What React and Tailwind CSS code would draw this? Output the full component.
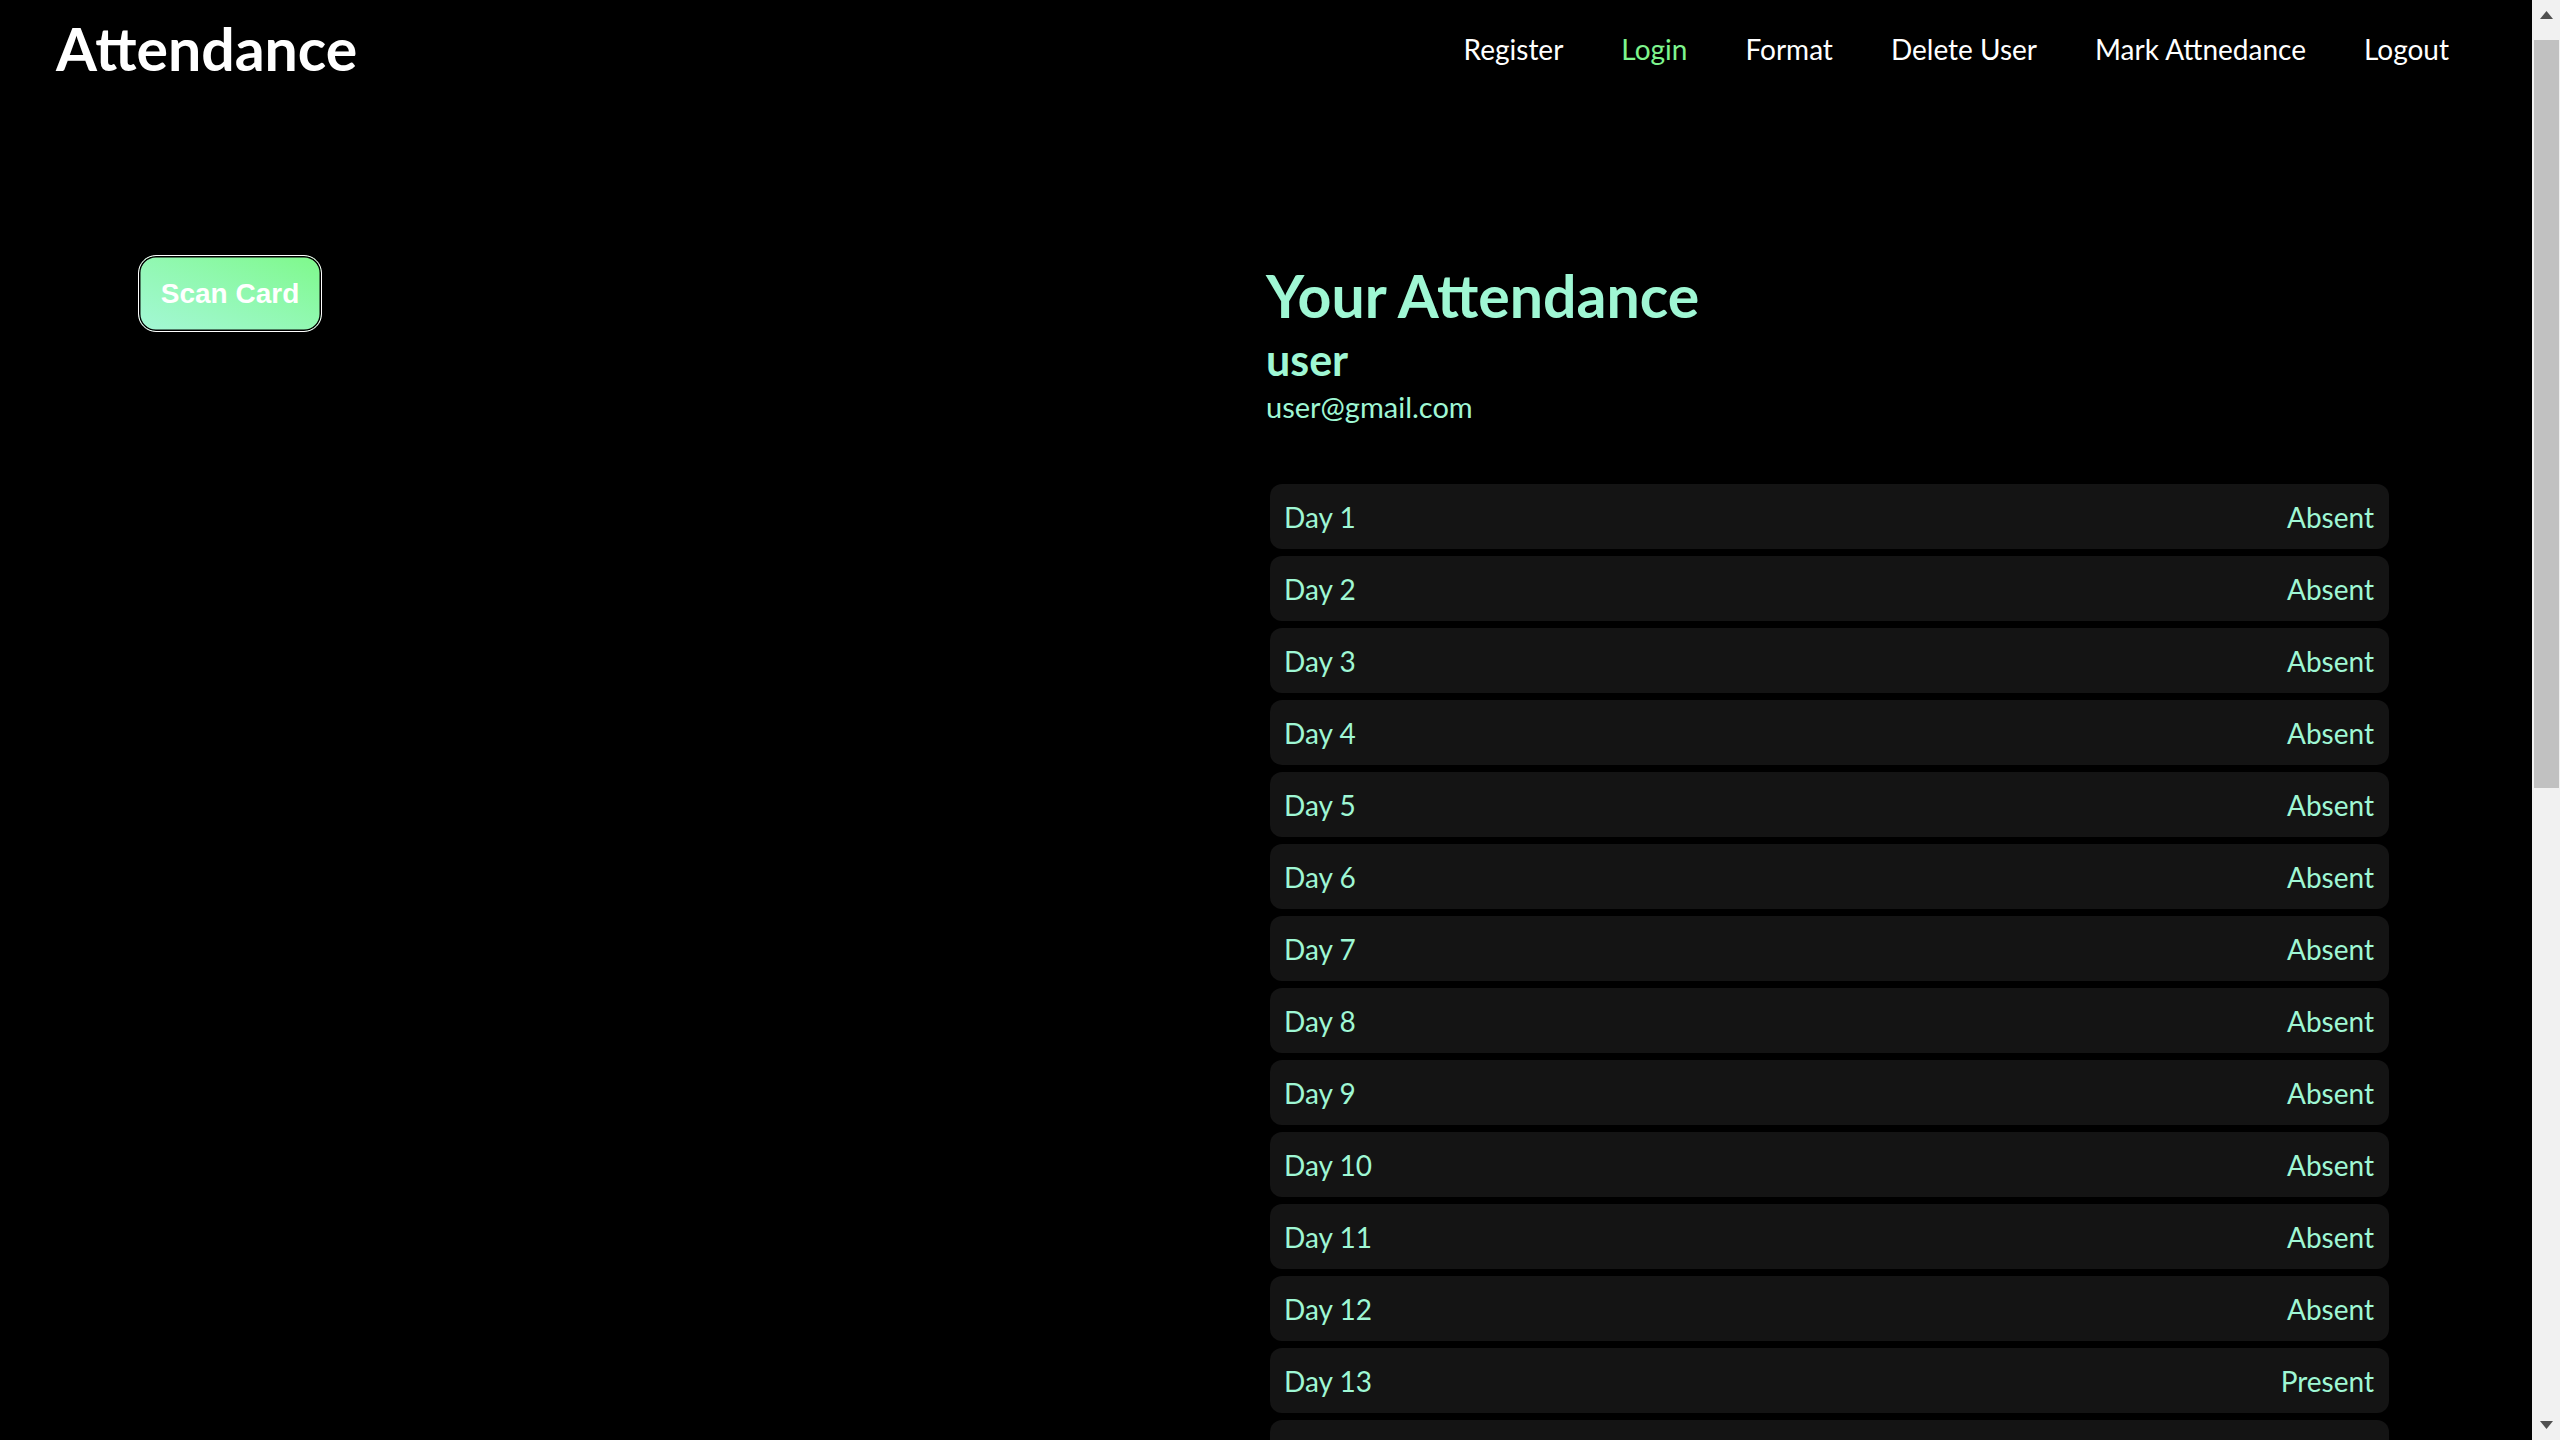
// App.jsx - attendance dashboard
import React from 'react';

const navLinks = ['Register', 'Login', 'Format', 'Delete User', 'Mark Attnedance', 'Logout'];

// 30 days of attendance, only day 13 marked present
const days = Array.from({ length: 30 }, (_, i) => ({
  day: i + 1,
  status: i + 1 === 13 ? 'Present' : 'Absent',
}));

// Window scrollbar as seen in the screenshot
const ScrollBar = () => (
  <div className="w-[28px] shrink-0 h-screen bg-[#f1f1f1] flex flex-col">
    <div className="h-[40px] flex justify-center pt-[11px]">
      <svg width="13" height="8" viewBox="0 0 13 8">
        <polygon points="6.5,0 13,8 0,8" fill="#505050" />
      </svg>
    </div>
    <div className="h-[748px] ml-[2px] mr-[1px] bg-[#c1c1c1]" />
    <div className="flex-1" />
    <div className="h-[40px] flex justify-center pt-[21px]">
      <svg width="13" height="8" viewBox="0 0 13 8">
        <polygon points="0,0 13,0 6.5,8" fill="#505050" />
      </svg>
    </div>
  </div>
);

const App = () => {
  return (
    <div className="flex h-screen overflow-hidden bg-black font-[Lato,sans-serif]">
      <div className="flex-1 min-w-0 overflow-hidden">
        {/* Header */}
        <header className="flex items-center justify-between pl-[56px] pr-[54px] pt-[19px]">
          <h1 className="text-[59px] leading-none font-bold text-white">Attendance</h1>
          <nav className="flex">
            {navLinks.map((link) => (
              <a
                key={link}
                href="#"
                className={`px-[29px] text-[28px] leading-none ${
                  link === 'Login' ? 'text-[#7ef58e]' : 'text-white'
                }`}
              >
                {link}
              </a>
            ))}
          </nav>
        </header>

        {/* Main Content */}
        <main className="grid grid-cols-2 items-start pt-[177px]">
          {/* Scanner */}
          <div className="pl-[138px]">
            <button className="w-[184px] h-[77px] rounded-[18px] border border-white bg-linear-to-tr from-[#a4f7d6] to-[#7ef98a] shadow-[inset_0_0_0_1.5px_#000] text-white text-[28px] font-bold font-['Liberation_Sans',Arial,sans-serif]">
              Scan Card
            </button>
          </div>

          {/* Attendance list */}
          <div className="pt-[11px] text-[#9ff7d4]">
            <h2 className="text-[59px] leading-none font-bold">Your Attendance</h2>
            <h3 className="mt-[13px] text-[43px] leading-none font-bold">user</h3>
            <p className="mt-[11px] text-[29px] leading-none">user@gmail.com</p>

            <ul className="mt-[63px] pl-[4px] pr-[143px] flex flex-col gap-[7px]">
              {days.map((d) => (
                <li
                  key={d.day}
                  className="h-[65px] flex items-center justify-between pl-[14px] pr-[15px] bg-[#141414] rounded-[12px] text-[28px] leading-none"
                >
                  <span>Day {d.day}</span>
                  <span>{d.status}</span>
                </li>
              ))}
            </ul>
          </div>
        </main>
      </div>
      <ScrollBar />
    </div>
  );
};

export default App;
